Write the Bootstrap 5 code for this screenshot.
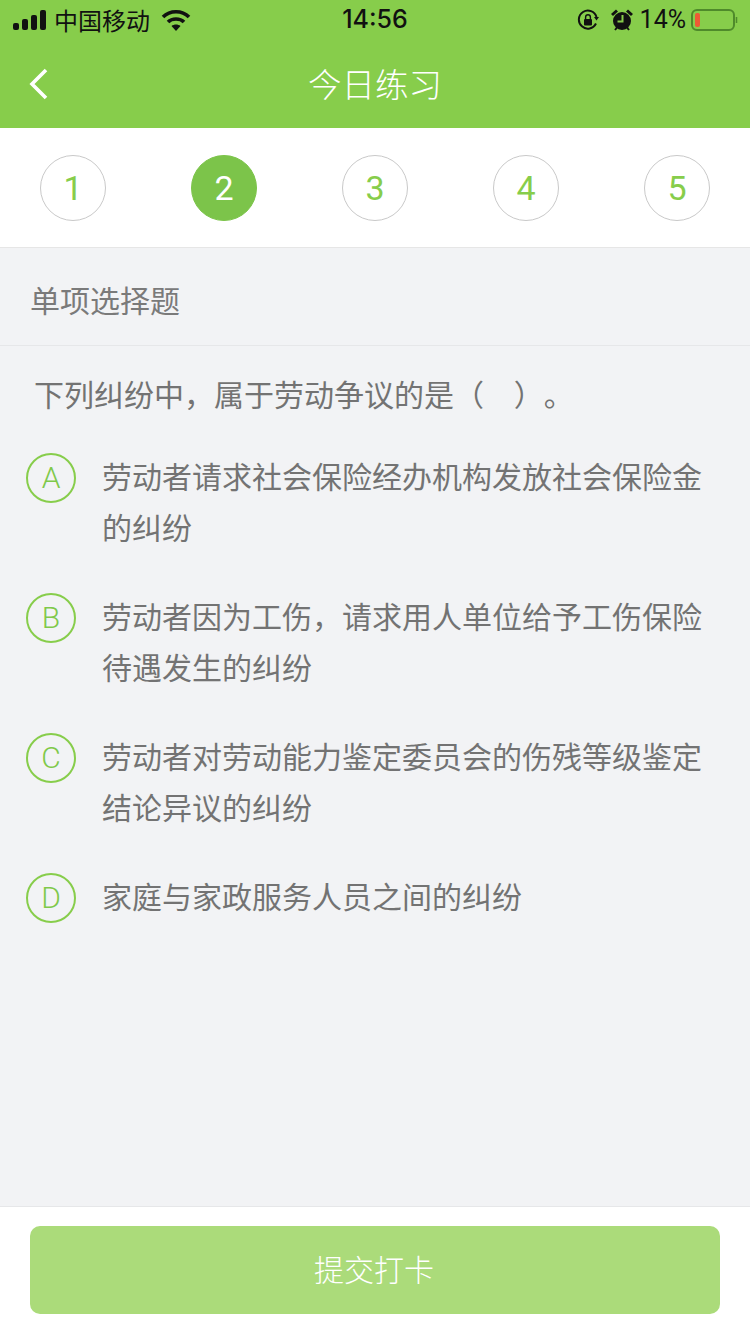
<!DOCTYPE html>
<html lang="zh-CN">
<head>
    <meta charset="UTF-8" />
    <meta name="viewport" content="width=device-width, initial-scale=1" />
    <title>今日练习</title>
    <link href="https://cdn.jsdelivr.net/npm/bootstrap@5.3.0/dist/css/bootstrap.min.css" rel="stylesheet" />
    <style>
        html, body { height: 100%; }
        body {
            width: 750px; height: 1334px; overflow: hidden; background: #f2f3f5;
            font-family: Roboto, "Noto Sans CJK SC", sans-serif; font-weight: 400; color: #737373;
            text-spacing-trim: space-all;
        }
        .app-head { background: #87cd4b; height: 128px; }
        .status-row { height: 40px; padding: 0 12px 0 13px; color: #111; font-size: 24px; font-weight: 400; position: relative; }
        .status-time { position: absolute; left: 0; right: 0; text-align: center; font-family: Inter, sans-serif; font-weight: 500; font-size: 25px; }
        .carrier { margin-left: 6px; margin-right: 11px; font-family: "Noto Sans CJK SC", sans-serif; font-weight: 400; }
        .batt-pct { font-size: 25px; margin: 0 5px 0 7px; }
        .title-row { height: 88px; position: relative; padding-top: 4px; }
        .page-title { color: #fff; font-size: 33.5px; line-height: 1; font-weight: 300; }
        .back-link { position: absolute; left: 29px; top: 28px; line-height: 0; }
        .step-bar { height: 120px; background: #fff; border-bottom: 1px solid #e6e6e6; padding: 27px 40px 0; }
        .step-dot {
            width: 66px; height: 66px; border-radius: 50%; border: 1px solid #c9c9c9;
            color: #87cd4b; font-size: 34px; line-height: 1;
        }
        .step-dot.is-on { background: #7cc44a; border-color: #7cc44a; color: #fff; }
        .kind-row { height: 98px; border-bottom: 1px solid #e6e7e9; padding: 10px 0 0 30px; font-size: 30px; color: #7a7a7a; }
        .ques-text { font-size: 30px; line-height: 51px; padding: 24px 0 0 34px; margin: 0; white-space: nowrap; }
        .opt-list { padding: 31px 40px 0 26px; gap: 38px; }
        .opt-letter {
            width: 50px; height: 50px; border-radius: 50%; border: 2px solid #87cd4b;
            color: #7fc94a; font-size: 30px; font-weight: 300; line-height: 1; flex: none; margin-top: 1px;
        }
        .opt-text { font-size: 30px; line-height: 51px; margin-left: 26px; }
        .foot-bar { height: 128px; background: #fff; border-top: 1px solid #e6e7e9; padding: 19px 30px 0; }
        .submit-btn {
            width: 100%; height: 88px; background: #abdb7a; border: 0; border-radius: 10px;
            color: #fff; font-size: 30px; font-weight: 300; padding-right: 14px;
        }
    </style>
</head>

<body class="d-flex flex-column">

    <!-- HEADER -->
    <header class="app-head flex-shrink-0">
        <div class="status-row d-flex align-items-center">
            <svg width="35" height="20" viewBox="0 0 35 20" fill="#111">
                <rect x="0" y="13" width="6" height="7" rx="2"/>
                <rect x="9" y="9" width="6" height="11" rx="2"/>
                <rect x="18" y="5" width="6" height="15" rx="2"/>
                <rect x="27" y="0" width="6" height="20" rx="2"/>
            </svg>
            <span class="carrier">中国移动</span>
            <svg width="30" height="22" viewBox="0 0 30 22" fill="none" stroke="#111" stroke-width="3.6">
                <path d="M2 8 C9 1 21 1 28 8"/>
                <path d="M7 13 C11 9 19 9 23 13"/>
                <path d="M15 22 L10.5 17 C13 15 17 15 19.5 17 Z" fill="#111" stroke="none"/>
            </svg>
            <span class="status-time">14:56</span>
            <div class="ms-auto d-flex align-items-center">
                <svg class="me-2" width="22" height="22" viewBox="0 0 22 22" fill="none" stroke="#111" stroke-width="2">
                    <path d="M19 14.5 A9 9 0 1 1 19.5 8"/>
                    <path d="M17 8 L22 8 L19.5 11.5 Z" fill="#111" stroke="none"/>
                    <rect x="7" y="10" width="8" height="6.5" rx="1" fill="#111" stroke="none"/>
                    <path d="M8.6 10 V8.2 a2.4 2.4 0 0 1 4.8 0 V10" stroke-width="1.4"/>
                </svg>
                <svg class="ms-1" width="22" height="22" viewBox="0 0 22 22">
                    <circle cx="11" cy="12" r="9" fill="#111"/>
                    <path d="M1 6 L6 1.5 M21 6 L16 1.5" stroke="#111" stroke-width="3"/>
                    <path d="M4 21 L6 18.5 M18 21 L16 18.5" stroke="#111" stroke-width="2"/>
                    <path d="M11.500 6 V12.500 H6.500" stroke="#87cd4b" stroke-width="2" fill="none"/>
                </svg>
                <span class="batt-pct">14%</span>
                <svg width="47" height="22" viewBox="0 0 47 22">
                    <rect x="1" y="1" width="42" height="20" rx="5" fill="none" stroke="#4f8a2b" stroke-width="2"/>
                    <rect x="4" y="4" width="5" height="14" rx="2" fill="#ee5a35"/>
                    <path d="M45.500 8 v6" stroke="#4f8a2b" stroke-width="1.500"/>
                </svg>
            </div>
        </div>
        <div class="title-row d-flex align-items-center justify-content-center">
            <a href="#" class="back-link">
                <svg width="20" height="32" viewBox="0 0 20 32" fill="none" stroke="#fff" stroke-width="3.600">
                    <path d="M17 2 L3 16 L17 30"/>
                </svg>
            </a>
            <span class="page-title">今日练习</span>
        </div>
    </header>

    <!-- STEPS -->
    <div class="step-bar d-flex justify-content-between flex-shrink-0">
        <div class="step-dot d-flex align-items-center justify-content-center">1</div>
        <div class="step-dot is-on d-flex align-items-center justify-content-center">2</div>
        <div class="step-dot d-flex align-items-center justify-content-center">3</div>
        <div class="step-dot d-flex align-items-center justify-content-center">4</div>
        <div class="step-dot d-flex align-items-center justify-content-center">5</div>
    </div>

    <!-- QUESTION -->
    <main class="flex-grow-1">
        <div class="kind-row d-flex align-items-center">单项选择题</div>
        <p class="ques-text">下列纠纷中，属于劳动争议的是（&nbsp;&nbsp;&nbsp;&nbsp;）。</p>
        <div class="opt-list d-flex flex-column">
            <div class="d-flex align-items-start">
                <div class="opt-letter d-flex align-items-center justify-content-center">A</div>
                <div class="opt-text">劳动者请求社会保险经办机构发放社会保险金的纠纷</div>
            </div>
            <div class="d-flex align-items-start">
                <div class="opt-letter d-flex align-items-center justify-content-center">B</div>
                <div class="opt-text">劳动者因为工伤，请求用人单位给予工伤保险待遇发生的纠纷</div>
            </div>
            <div class="d-flex align-items-start">
                <div class="opt-letter d-flex align-items-center justify-content-center">C</div>
                <div class="opt-text">劳动者对劳动能力鉴定委员会的伤残等级鉴定结论异议的纠纷</div>
            </div>
            <div class="d-flex align-items-start">
                <div class="opt-letter d-flex align-items-center justify-content-center">D</div>
                <div class="opt-text">家庭与家政服务人员之间的纠纷</div>
            </div>
        </div>
    </main>

    <!-- SUBMIT -->
    <footer class="foot-bar flex-shrink-0">
        <button type="button" class="btn submit-btn">提交打卡</button>
    </footer>

    <script src="https://cdn.jsdelivr.net/npm/bootstrap@5.3.0/dist/js/bootstrap.bundle.min.js"></script>
</body>
</html>
